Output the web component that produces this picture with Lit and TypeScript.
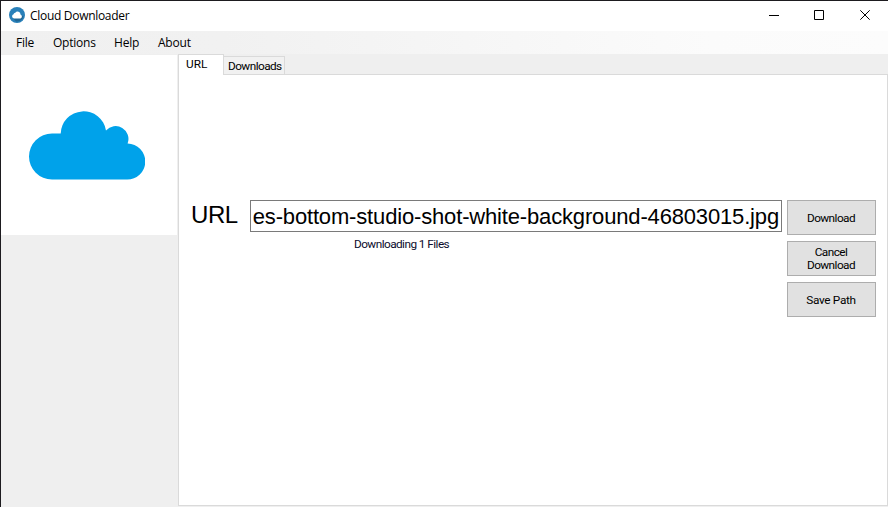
import { LitElement, html, css, svg } from "lit";
import { customElement, state } from "lit/decorators.js";

@customElement("app-root")
export class AppRoot extends LitElement {
  static styles = css`
    :host {
      display: block;
      width: 888px;
      height: 507px;
      overflow: hidden;
      color: #000;
      font-family: Roboto, "Liberation Sans", sans-serif;
      font-size: 11.8px;
      letter-spacing: -0.55px;
    }
    * { box-sizing: border-box; }
    svg { display: block; }
    .window {
      height: 507px;
      display: flex;
      flex-direction: column;
      border: solid #1d1b1f;
      border-width: 1px 0 0 1px;
      background: #efefef;
    }
    .title {
      height: 30px;
      flex: none;
      display: flex;
      align-items: center;
      background: #fff;
      padding: 0 0 2px 8px;
      font: 12px/16px "Open Sans", sans-serif;
    }
    .name { margin: 2px 0 0 5px; letter-spacing: -0.3px; }
    .controls { margin-left: auto; display: flex; }
    .ctl { width: 46px; display: flex; justify-content: center; }
    .ctl:first-child { width: 44px; }
    .menu {
      height: 23px;
      flex: none;
      display: flex;
      align-items: center;
      padding: 1px 0 0 15px;
      background: linear-gradient(90deg, #f0f0f0, #f1f1f1 25%, #fbfbfb 80%, #fcfcfc);
      font: 12px/16px "Open Sans", sans-serif;
      letter-spacing: -0.22px;
    }
    .menu span { white-space: nowrap; }
    .m0 { width: 37px; }
    .m1 { width: 61px; }
    .m2 { width: 44px; }
    .body { flex: 1; display: flex; min-height: 0; }
    .side { width: 177px; flex: none; }
    .picture {
      margin-top: 1px;
      width: 176px;
      height: 180px;
      background: #fff;
      padding: 55px 0 0 28px;
    }
    .tabs { flex: 1; display: flex; flex-direction: column; }
    .strip { height: 20px; display: flex; align-items: flex-end; }
    .tab {
      height: 18px;
      width: 61px;
      border: 1px solid #dadada;
      border-width: 1px 1px 0 0;
      background: #f1f1f1;
      padding: 2px 0 0 4px;
      line-height: 14px;
      white-space: nowrap;
    }
    .tab.on {
      height: 21px;
      width: 46px;
      margin-bottom: -1px;
      border-width: 1px 1px 0 1px;
      background: #fff;
      padding: 2px 0 0 7px;
      letter-spacing: 0;
      z-index: 1;
    }
    .page {
      height: 432px;
      border: 1px solid #dadada;
      background: #fff;
      padding: 125px 11px 0 12px;
      display: flex;
      align-items: flex-start;
    }
    .label {
      width: 59px;
      font: 24px/30px "Liberation Sans", sans-serif;
      letter-spacing: -0.4px;
    }
    .entry { width: 532px; }
    .field {
      height: 32px;
      border: 1px solid #7a7a7a;
      display: flex;
      justify-content: flex-end;
      padding-right: 2px;
      overflow: hidden;
      white-space: nowrap;
      font: 22px/32px "Liberation Sans", sans-serif;
      letter-spacing: -0.16px;
    }
    .status { margin: 5px 0 0 104px; line-height: 14px; color: #0c0c2c; }
    .buttons { margin-left: 5px; display: flex; flex-direction: column; gap: 6px; }
    button {
      width: 89px;
      height: 35px;
      padding: 1px 13px 0 12px;
      border: 1px solid #adadad;
      border-radius: 0;
      background: #e1e1e1;
      color: #000;
      font: 11.8px/13px Roboto, "Liberation Sans", sans-serif;
      letter-spacing: -0.55px;
    }
    button:last-child { letter-spacing: -0.3px; }
  `;

  @state() private tab = "URL";

  render() {
    return html`
      <div class="window">
        <div class="title">
          <svg width="16" height="16" viewBox="0 0 16 16">
            <circle cx="8" cy="8" r="8" fill="#2980b9" />
            <path d="M4 11.3 7 14.5a7 7 0 0 0 7.5-5L12 8z" fill="#206694" />
            <path d="M4.9 11.4a2.1 2.1 0 0 1-.3-4.1 1.7 1.7 0 0 1 1.7-1.6 2.9 2.9 0 0 1 5.2 1.9 2 2 0 0 1 0 3.8z" fill="#fff" />
          </svg>
          <span class="name">Cloud Downloader</span>
          <div class="controls">
            ${[
              svg`<path d="M0 5.5H10" />`,
              svg`<path d="M.5 .5H9.5V9.5H.5z" />`,
              svg`<path d="M.3 .3 9.7 9.7M9.7 .3 .3 9.7" />`,
            ].map((p) => html`<div class="ctl"><svg width="10" height="10" fill="none" stroke="#000">${p}</svg></div>`)}
          </div>
        </div>
        <div class="menu">
          ${["File", "Options", "Help", "About"].map((m, i) => html`<span class="m${i}">${m}</span>`)}
        </div>
        <div class="body">
          <div class="side">
            <div class="picture">
              <svg width="116" height="70" viewBox="0 0 116 70">
                <path fill="#00a2ea" d="M23 69.5A23 23 0 0 1 23 23.5H31.7A22.8 22.8 0 0 1 77 20.5 12.8 12.8 0 0 1 98.6 33.5A18 18 0 0 1 98 69.5z" />
              </svg>
            </div>
          </div>
          <div class="tabs">
            <div class="strip">
              ${["URL", "Downloads"].map(
                (t) => html`<div class="tab ${t === this.tab ? "on" : ""}" @click=${() => (this.tab = t)}>${t}</div>`
              )}
            </div>
            <div class="page">
              <div class="label">URL</div>
              <div class="entry">
                <div class="field"><span>es-bottom-studio-shot-white-background-46803015.jpg</span></div>
                <div class="status">Downloading 1 Files</div>
              </div>
              <div class="buttons">
                ${["Download", "Cancel Download", "Save Path"].map((b) => html`<button>${b}</button>`)}
              </div>
            </div>
          </div>
        </div>
      </div>
    `;
  }
}
